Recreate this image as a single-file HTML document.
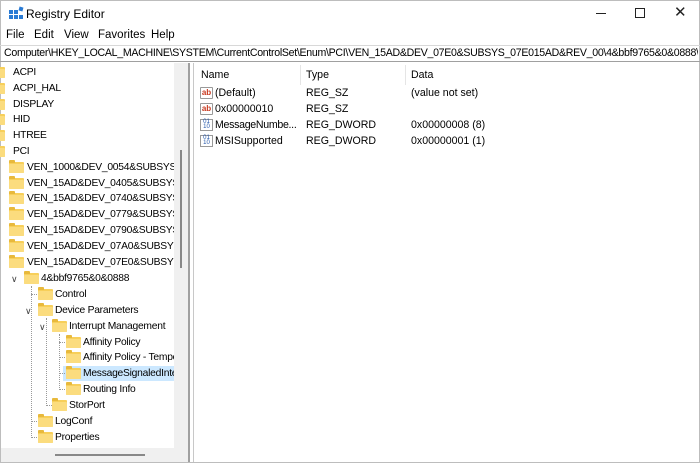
<!DOCTYPE html><html><head><style>
body{margin:0;width:700px;height:463px;overflow:hidden;background:#fff;font-family:"Liberation Sans",sans-serif;font-size:11px;color:#000;position:relative}
.a{position:absolute;white-space:nowrap}
.f{position:absolute;width:15px;height:11px;background:#f7cf5a;border-radius:1px}
.f:before{content:"";position:absolute;left:0;top:-2px;width:6px;height:3px;background:#e8b93c;border-radius:1px 1px 0 0}
.f:after{content:"";position:absolute;left:0;top:2px;width:15px;height:9px;background:#fbdc7e;border-radius:1px}
.t{position:absolute;line-height:15px;white-space:nowrap;font-size:10.3px;letter-spacing:-0.25px}
.chev{position:absolute;font-size:9px;color:#444}
.dv{position:absolute;border-left:1px dotted #999}
.dh{position:absolute;border-top:1px dotted #999;width:8px}
.r{position:absolute;white-space:nowrap;font-size:10.6px}
</style></head><body>
<div class="a" style="left:0;top:0;border:1px solid #bdbdbd;box-sizing:border-box;width:700px;height:463px"></div>
<svg class="a" style="left:8px;top:6px" width="16" height="16"><rect x="1" y="4" width="4" height="4" fill="#2a7bd4"/><rect x="6" y="4" width="4" height="4" fill="#2a7bd4"/><rect x="1" y="9" width="4" height="4" fill="#2a7bd4"/><rect x="6" y="9" width="4" height="4" fill="#2a7bd4"/><rect x="11" y="9" width="4" height="4" fill="#2a7bd4"/><rect x="11" y="1" width="4" height="4" fill="#2a7bd4" transform="rotate(15 13 3)"/></svg>
<div class="a" style="left:26px;top:7px;font-size:12px">Registry Editor</div>
<div class="a" style="left:596px;top:13px;width:10px;border-top:1px solid #222"></div>
<div class="a" style="left:635px;top:8px;width:8px;height:8px;border:1px solid #222"></div>
<div class="a" style="left:674px;top:3px;font-size:15px;color:#222">✕</div>
<div class="a" style="left:6px;top:29px;font-size:11.5px">File</div>
<div class="a" style="left:34px;top:29px;font-size:11.5px">Edit</div>
<div class="a" style="left:64px;top:29px;font-size:11.5px">View</div>
<div class="a" style="left:98px;top:29px;font-size:11.5px">Favorites</div>
<div class="a" style="left:151px;top:29px;font-size:11.5px">Help</div>
<div class="a" style="left:0;top:45px;width:700px;height:17px;border-top:1px solid #d8d8d8;border-bottom:1px solid #a0a0a0;box-sizing:border-box"></div>
<div class="a" style="left:4px;top:47px;width:694px;overflow:hidden;font-size:10.6px;letter-spacing:-0.3px">Computer\HKEY_LOCAL_MACHINE\SYSTEM\CurrentControlSet\Enum\PCI\VEN_15AD&amp;DEV_07E0&amp;SUBSYS_07E015AD&amp;REV_00\4&amp;bbf9765&amp;0&amp;0888\</div>
<div class="a" style="left:188px;top:63px;width:2px;height:399px;background:#a0a0a0"></div>
<div class="a" style="left:193px;top:63px;width:1px;height:399px;background:#c8c8c8"></div>
<div class="a" style="left:0;top:63px;width:174px;height:385px;overflow:hidden">
<div style="position:absolute;left:0;top:-63px">
<div class="a" style="left:63px;top:366px;width:111px;height:15px;background:#cce8ff"></div>
<div class="dv" style="left:31px;top:286px;height:152px"></div>
<div class="dh" style="left:31px;top:294px"></div><div class="dh" style="left:31px;top:421px"></div><div class="dh" style="left:31px;top:437px"></div>
<div class="dv" style="left:46px;top:318px;height:88px"></div><div class="dh" style="left:46px;top:405px"></div>
<div class="dv" style="left:59px;top:334px;height:56px"></div>
<div class="dh" style="left:59px;top:342px"></div><div class="dh" style="left:59px;top:357px"></div><div class="dh" style="left:59px;top:373px"></div><div class="dh" style="left:59px;top:389px"></div>
<div class="f" style="left:-10px;top:67px"></div><div class="t" style="left:13px;top:65px">ACPI</div>
<div class="f" style="left:-10px;top:83px"></div><div class="t" style="left:13px;top:81px">ACPI_HAL</div>
<div class="f" style="left:-10px;top:99px"></div><div class="t" style="left:13px;top:97px">DISPLAY</div>
<div class="f" style="left:-10px;top:114px"></div><div class="t" style="left:13px;top:112px">HID</div>
<div class="f" style="left:-10px;top:130px"></div><div class="t" style="left:13px;top:128px">HTREE</div>
<div class="f" style="left:-10px;top:146px"></div><div class="t" style="left:13px;top:144px">PCI</div>
<div class="f" style="left:9px;top:162px"></div><div class="t" style="left:27px;top:160px">VEN_1000&amp;DEV_0054&amp;SUBSYS_</div>
<div class="f" style="left:9px;top:178px"></div><div class="t" style="left:27px;top:176px">VEN_15AD&amp;DEV_0405&amp;SUBSYS_</div>
<div class="f" style="left:9px;top:193px"></div><div class="t" style="left:27px;top:191px">VEN_15AD&amp;DEV_0740&amp;SUBSYS_</div>
<div class="f" style="left:9px;top:209px"></div><div class="t" style="left:27px;top:207px">VEN_15AD&amp;DEV_0779&amp;SUBSYS_</div>
<div class="f" style="left:9px;top:225px"></div><div class="t" style="left:27px;top:223px">VEN_15AD&amp;DEV_0790&amp;SUBSYS_</div>
<div class="f" style="left:9px;top:241px"></div><div class="t" style="left:27px;top:239px">VEN_15AD&amp;DEV_07A0&amp;SUBSYS_</div>
<div class="f" style="left:9px;top:257px"></div><div class="t" style="left:27px;top:255px">VEN_15AD&amp;DEV_07E0&amp;SUBSYS_</div>
<div class="chev" style="left:11px;top:274px">∨</div>
<div class="f" style="left:24px;top:273px"></div><div class="t" style="left:41px;top:271px">4&amp;bbf9765&amp;0&amp;0888</div>
<div class="f" style="left:38px;top:289px"></div><div class="t" style="left:55px;top:287px">Control</div>
<div class="chev" style="left:25px;top:306px">∨</div>
<div class="f" style="left:38px;top:305px"></div><div class="t" style="left:55px;top:303px">Device Parameters</div>
<div class="chev" style="left:39px;top:322px">∨</div>
<div class="f" style="left:52px;top:321px"></div><div class="t" style="left:69px;top:319px">Interrupt Management</div>
<div class="f" style="left:66px;top:337px"></div><div class="t" style="left:83px;top:335px">Affinity Policy</div>
<div class="f" style="left:66px;top:352px"></div><div class="t" style="left:83px;top:350px">Affinity Policy - Temporary</div>
<div class="f" style="left:66px;top:368px"></div><div class="t" style="left:83px;top:366px">MessageSignaledInterrupt</div>
<div class="f" style="left:66px;top:384px"></div><div class="t" style="left:83px;top:382px">Routing Info</div>
<div class="f" style="left:52px;top:400px"></div><div class="t" style="left:69px;top:398px">StorPort</div>
<div class="f" style="left:38px;top:416px"></div><div class="t" style="left:55px;top:414px">LogConf</div>
<div class="f" style="left:38px;top:432px"></div><div class="t" style="left:55px;top:430px">Properties</div>
</div></div>
<div class="a" style="left:174px;top:63px;width:14px;height:399px;background:#f0f0f0"></div>
<div class="a" style="left:180px;top:150px;width:2px;height:118px;background:#888"></div>
<div class="a" style="left:1px;top:448px;width:187px;height:14px;background:#f0f0f0"></div>
<div class="a" style="left:55px;top:454px;width:90px;height:2px;background:#888"></div>
<div class="r" style="left:201px;top:69px">Name</div>
<div class="r" style="left:306px;top:69px">Type</div>
<div class="r" style="left:411px;top:69px">Data</div>
<div class="a" style="left:300px;top:65px;width:1px;height:20px;background:#e5e5e5"></div>
<div class="a" style="left:405px;top:65px;width:1px;height:20px;background:#e5e5e5"></div>
<div class="a" style="left:200px;top:87px;width:13px;height:12px;border:1px solid #999;border-radius:1px;font-size:8px;color:#c8381e;font-weight:bold;line-height:10px;text-align:center;box-sizing:border-box">ab</div>
<div class="a" style="left:200px;top:103px;width:13px;height:12px;border:1px solid #999;border-radius:1px;font-size:8px;color:#c8381e;font-weight:bold;line-height:10px;text-align:center;box-sizing:border-box">ab</div>
<div class="a" style="left:200px;top:119px;width:13px;height:12px;border:1px solid #999;font-size:6px;color:#2255aa;line-height:5px;text-align:center;box-sizing:border-box">01<br>10</div>
<div class="a" style="left:200px;top:135px;width:13px;height:12px;border:1px solid #999;font-size:6px;color:#2255aa;line-height:5px;text-align:center;box-sizing:border-box">01<br>10</div>
<div class="r" style="left:215px;top:87px">(Default)</div><div class="r" style="left:306px;top:87px">REG_SZ</div><div class="r" style="left:411px;top:87px">(value not set)</div>
<div class="r" style="left:215px;top:103px">0x00000010</div><div class="r" style="left:306px;top:103px">REG_SZ</div>
<div class="r" style="left:215px;top:119px;letter-spacing:-0.3px">MessageNumbe...</div><div class="r" style="left:306px;top:119px">REG_DWORD</div><div class="r" style="left:411px;top:119px">0x00000008 (8)</div>
<div class="r" style="left:215px;top:135px">MSISupported</div><div class="r" style="left:306px;top:135px">REG_DWORD</div><div class="r" style="left:411px;top:135px">0x00000001 (1)</div>
<div class="a" style="left:0;top:462px;width:700px;height:1px;background:#bdbdbd"></div>
</body></html>
